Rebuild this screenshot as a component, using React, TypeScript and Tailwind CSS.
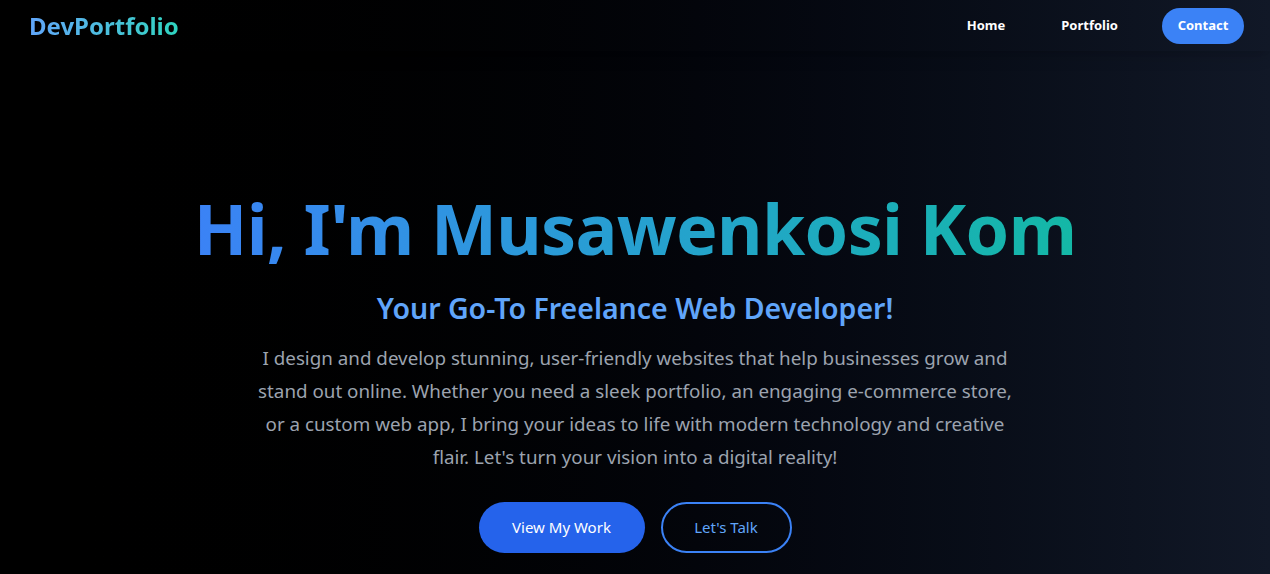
import React from "react";

const App = () => {
  return (
    <div
      className="min-h-screen bg-gradient-to-r from-black to-[#111827] text-white"
      style={{ fontFamily: '"Noto Sans", "Open Sans", sans-serif' }}
    >
      {/* Header */}
      <header className="h-[51px] flex items-center justify-between pl-[29px] pr-[26px] shadow-lg">
        <span className="text-[24px] font-bold bg-gradient-to-r from-[#60a5fa] to-[#2dd4bf] bg-clip-text text-transparent">
          DevPortfolio
        </span>
        <nav className="flex items-center text-[13px] font-bold">
          <a className="mr-[56px]">Home</a>
          <a className="mr-[44px]">Portfolio</a>
          <a className="h-9 w-[82px] flex items-center justify-center rounded-full bg-[#3b82f6]">Contact</a>
        </nav>
      </header>

      {/* Hero */}
      <section className="flex flex-col items-center text-center pt-[142px] pb-6">
        <h1 className="text-[70px] leading-none tracking-[-0.01em] font-bold bg-gradient-to-r from-[#3b82f6] to-[#14b8a6] bg-clip-text text-transparent pb-3">
          Hi, I'm Musawenkosi Kom
        </h1>
        <h2 className="mt-3 text-[28.5px] font-semibold text-[#60a5fa]">
          Your Go-To Freelance Web Developer!
        </h2>
        <p className="mt-[12px] max-w-[760px] text-[18.8px] leading-[33px] text-[#9ca3af]">
          I design and develop stunning, user-friendly websites that help businesses grow and stand out online.
          Whether you need a sleek portfolio, an engaging e-commerce store, or a custom web app, I bring your ideas
          to life with modern technology and creative flair. Let's turn your vision into a digital reality!
        </p>
        <div className="mt-[28px] flex gap-4">
          <a className="h-[51px] w-[166px] flex items-center justify-center rounded-full bg-[#2563eb] text-[15px]">
            View My Work
          </a>
          <a className="h-[51px] w-[131px] flex items-center justify-center rounded-full border-2 border-[#3b82f6] text-[#60a5fa] text-[15px]">
            Let's Talk
          </a>
        </div>
      </section>
    </div>
  );
};

export default App;
